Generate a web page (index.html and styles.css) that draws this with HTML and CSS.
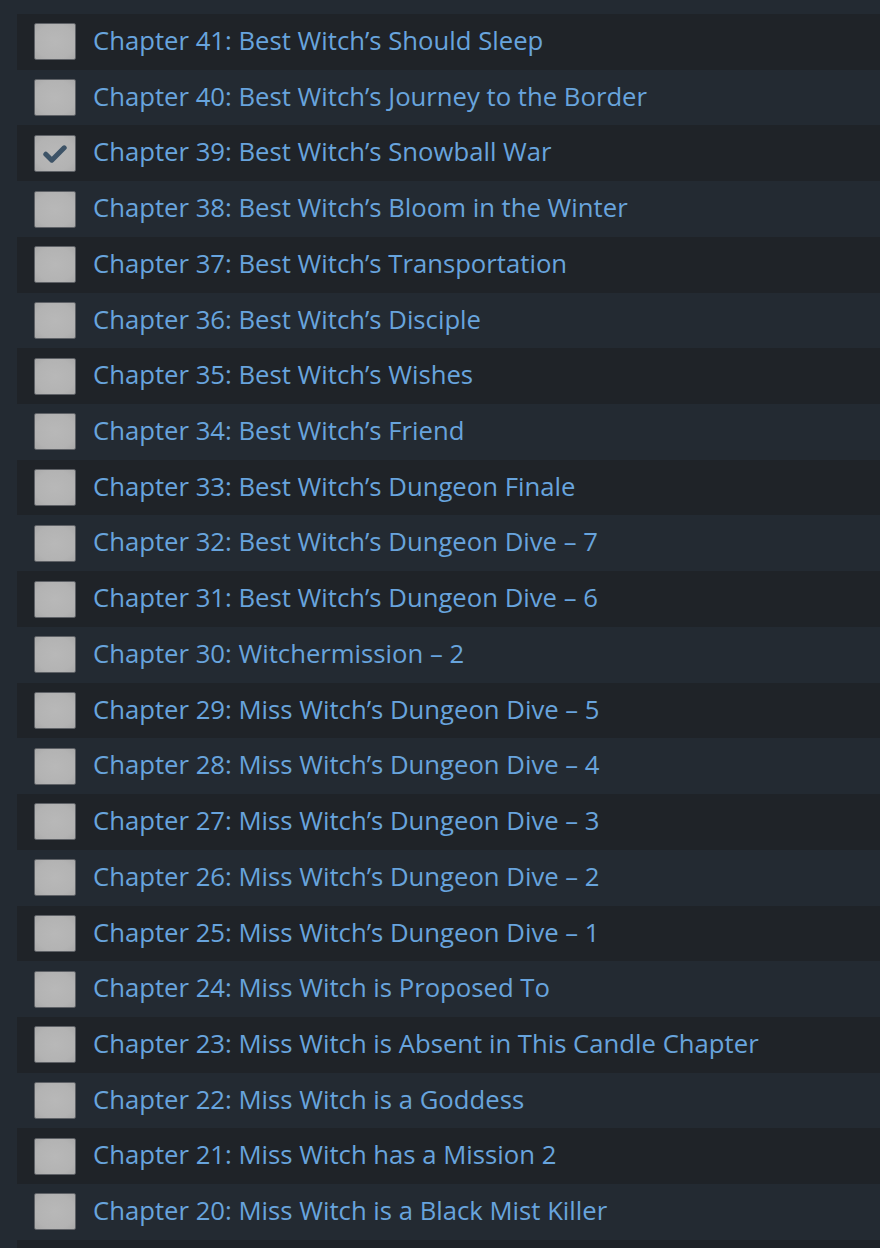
FILE: index.html
```html
<!DOCTYPE html>
<html>
<head>
<meta charset="utf-8">
<link rel="stylesheet" href="styles.css">
</head>
<body>
<ul class="chapters">
  <li class="row odd"><span class="box"></span><a class="title">Chapter 41: Best Witch’s Should Sleep</a></li>
  <li class="row"><span class="box"></span><a class="title">Chapter 40: Best Witch’s Journey to the Border</a></li>
  <li class="row odd"><span class="box checked"><svg viewBox="0 0 24 18" width="24" height="18"><path d="M2.8 9.2 L8.8 15.2 L21.2 2.8" fill="none" stroke="#3d5367" stroke-width="5" stroke-linecap="round" stroke-linejoin="round"/></svg></span><a class="title">Chapter 39: Best Witch’s Snowball War</a></li>
  <li class="row"><span class="box"></span><a class="title">Chapter 38: Best Witch’s Bloom in the Winter</a></li>
  <li class="row odd"><span class="box"></span><a class="title">Chapter 37: Best Witch’s Transportation</a></li>
  <li class="row"><span class="box"></span><a class="title">Chapter 36: Best Witch’s Disciple</a></li>
  <li class="row odd"><span class="box"></span><a class="title">Chapter 35: Best Witch’s Wishes</a></li>
  <li class="row"><span class="box"></span><a class="title">Chapter 34: Best Witch’s Friend</a></li>
  <li class="row odd"><span class="box"></span><a class="title">Chapter 33: Best Witch’s Dungeon Finale</a></li>
  <li class="row"><span class="box"></span><a class="title">Chapter 32: Best Witch’s Dungeon Dive – 7</a></li>
  <li class="row odd"><span class="box"></span><a class="title">Chapter 31: Best Witch’s Dungeon Dive – 6</a></li>
  <li class="row"><span class="box"></span><a class="title">Chapter 30: Witchermission – 2</a></li>
  <li class="row odd"><span class="box"></span><a class="title">Chapter 29: Miss Witch’s Dungeon Dive – 5</a></li>
  <li class="row"><span class="box"></span><a class="title">Chapter 28: Miss Witch’s Dungeon Dive – 4</a></li>
  <li class="row odd"><span class="box"></span><a class="title">Chapter 27: Miss Witch’s Dungeon Dive – 3</a></li>
  <li class="row"><span class="box"></span><a class="title">Chapter 26: Miss Witch’s Dungeon Dive – 2</a></li>
  <li class="row odd"><span class="box"></span><a class="title">Chapter 25: Miss Witch’s Dungeon Dive – 1</a></li>
  <li class="row"><span class="box"></span><a class="title">Chapter 24: Miss Witch is Proposed To</a></li>
  <li class="row odd"><span class="box"></span><a class="title">Chapter 23: Miss Witch is Absent in This Candle Chapter</a></li>
  <li class="row"><span class="box"></span><a class="title">Chapter 22: Miss Witch is a Goddess</a></li>
  <li class="row odd"><span class="box"></span><a class="title">Chapter 21: Miss Witch has a Mission 2</a></li>
  <li class="row"><span class="box"></span><a class="title">Chapter 20: Miss Witch is a Black Mist Killer</a></li>
  <li class="row odd"></li>
</ul>
</body>
</html>
```
FILE: styles.css
```css
html, body {
  margin: 0;
  padding: 0;
  background: #232a32;
  overflow: hidden;
}
body {
  height: 1248px;
}
.chapters {
  list-style: none;
  margin: 0;
  padding: 14px 0 0 17px;
}
.row {
  height: 55.72px;
  display: flex;
  align-items: center;
  padding-left: 17px;
  box-sizing: border-box;
  background: #232a32;
}
.row.odd {
  background: #1f2328;
}
.box {
  width: 40px;
  height: 35px;
  flex: 0 0 auto;
  border: 1px solid #5e6166;
  border-radius: 2px;
  background: radial-gradient(ellipse at center, #b8b8b8 0%, #b3b3b3 70%, #a9a9a9 100%);
  display: flex;
  align-items: center;
  justify-content: center;
  margin-right: 18px;
}
.box svg {
  display: block;
  margin-top: 1px;
}
.title {
  font-family: "Open Sans", "Noto Sans", sans-serif;
  font-size: 25.7px;
  color: #68a4dd;
  white-space: nowrap;
  text-decoration: none;
  line-height: 1;
  margin-left: -1px;
  margin-top: -2px;
}
```
